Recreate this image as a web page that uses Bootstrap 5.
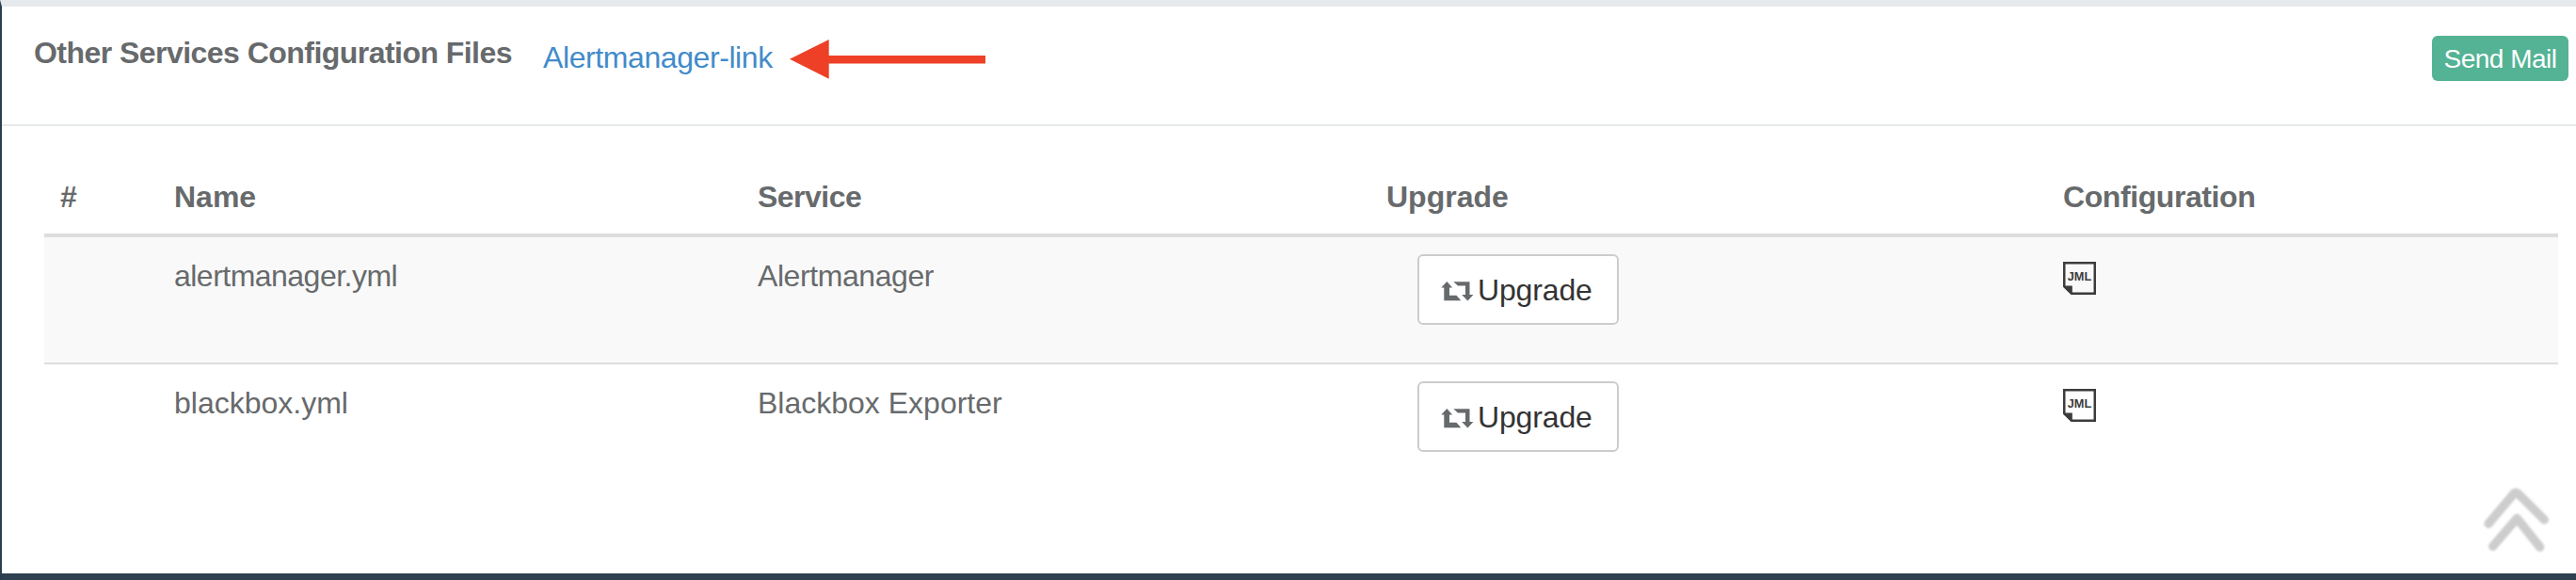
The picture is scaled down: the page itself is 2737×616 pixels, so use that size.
<!DOCTYPE html>
<html lang="en">
<head>
<meta charset="utf-8">
<title>Configuration Files</title>
<link href="https://cdn.jsdelivr.net/npm/bootstrap@5.3.0/dist/css/bootstrap.min.css" rel="stylesheet">
<style>
  body { font: 32px/46px "Liberation Sans", Arial, sans-serif; color: #676a6c; background: #fff; }
  .panel-box { height: 616px; border-left: 2px solid #2b3e50; border-top: 7px solid #e7eaec; }
  .panel-head { height: 127px; border-bottom: 2px solid #e7eaec; padding: 26px 8px 0 34px; }
  .panel-title { font: inherit; font-weight: 700; letter-spacing: -.54px; width: 541px; }
  .link-am { color: #428bca; letter-spacing: -.41px; width: 261px; margin-top: 5px; }
  .arrow { margin-top: 9px; }
  .btn-mail { margin-top: 5px; width: 145px; height: 48px; padding: 0; border: 0; border-radius: 6px; background: #53b394; color: #fff; font-size: 28px; line-height: 50px; letter-spacing: -.5px; }
  .panel-content { padding: 34px 19px 0 45px; }
  .svc-table { table-layout: fixed; width: 2671px; color: inherit; border-collapse: separate; border-spacing: 0; --bs-table-bg: transparent; }
  .svc-table > :not(caption) > * > * { padding: 18px 0 0 17px; border: 0; color: inherit; box-shadow: none; vertical-align: top; }
  .svc-table > thead > tr > th { height: 84px; border-bottom: 4px solid #ddd; }
  .svc-table > tbody > tr > td { height: 133px; }
  .svc-table > tbody > tr:first-child > td { height: 135px; background: #f9f9f9; border-bottom: 2px solid #ddd; }
  .svc-table > * > tr > :nth-child(2), .svc-table > * > tr > :nth-child(3) { padding-left: 16px; }
  .tight { letter-spacing: -.52px; }
  .snug { letter-spacing: -.42px; }
  .btn-upg { margin-left: 33px; width: 214px; height: 75px; padding: 13px 0 0 23px; border: 2px solid #ccc; border-radius: 6px; background: #fff; color: #333; font-size: 32px; line-height: 46px; gap: 4px; letter-spacing: -.15px; }
  .btn-upg svg { margin-top: 14px; }
  .to-top { position: absolute; left: 2636px; top: 514px; }
  .to-top svg { filter: blur(.8px); }
  .foot-bar { height: 7px; background: #2f4050; }
</style>
</head>
<body class="overflow-hidden">
<main class="panel-box d-flex flex-column">
  <header class="panel-head d-flex align-items-start flex-shrink-0">
    <h5 class="panel-title mb-0 text-nowrap">Other Services Configuration Files</h5>
    <a href="#" class="link-am text-decoration-none text-nowrap">Alertmanager-link</a>
    <svg class="arrow" width="210" height="42" viewBox="0 0 210 42"><path fill="#ed4026" d="M1 20.8 42.7 0V17H209V25.4H42.7V41.7Z"/></svg>
    <button class="btn btn-mail ms-auto text-nowrap">Send Mail</button>
  </header>
  <section class="panel-content flex-grow-1">
    <table class="table svc-table mb-0">
      <colgroup><col style="width:122px"><col style="width:620px"><col style="width:667px"><col style="width:719px"><col></colgroup>
      <thead><tr><th>&#35;</th><th>Name</th><th class="tight">Service</th><th>Upgrade</th><th class="snug">Configuration</th></tr></thead>
      <tbody>
        <tr>
          <td></td><td class="tight">alertmanager.yml</td><td class="snug">Alertmanager</td>
          <td><button class="btn btn-upg d-flex align-items-start"><svg width="35" height="21" viewBox="0 0 35 21" fill="#676a6c"><path d="M6.3 0 12.2 6.4H9V14.7H16.5L21.3 20.3H3.3V6.4H.3Z"/><path d="M13.3 .3H30.5V13.9H34.4L28.4 20.5 22.2 13.9H26V4.5H18Z"/></svg><span>Upgrade</span></button></td>
          <td><svg class="d-block mt-2" width="35" height="35" viewBox="0 0 35 35"><path d="M1.25 1.25H33.75V33.75H9L1.25 26.2Z" fill="none" stroke="#3c3c3c" stroke-width="2.5"/><path d="M1 25.5H9.8V34H8.6L1 27Z" fill="#3c3c3c"/><text x="4.7" y="20" font-size="12.5" font-weight="700" textLength="25.5" lengthAdjust="spacingAndGlyphs" letter-spacing="0" fill="#3c3c3c">JML</text></svg></td>
        </tr>
        <tr>
          <td></td><td>blackbox.yml</td><td>Blackbox Exporter</td>
          <td><button class="btn btn-upg d-flex align-items-start"><svg width="35" height="21" viewBox="0 0 35 21" fill="#676a6c"><path d="M6.3 0 12.2 6.4H9V14.7H16.5L21.3 20.3H3.3V6.4H.3Z"/><path d="M13.3 .3H30.5V13.9H34.4L28.4 20.5 22.2 13.9H26V4.5H18Z"/></svg><span>Upgrade</span></button></td>
          <td><svg class="d-block mt-2" width="35" height="35" viewBox="0 0 35 35"><path d="M1.25 1.25H33.75V33.75H9L1.25 26.2Z" fill="none" stroke="#3c3c3c" stroke-width="2.5"/><path d="M1 25.5H9.8V34H8.6L1 27Z" fill="#3c3c3c"/><text x="4.7" y="20" font-size="12.5" font-weight="700" textLength="25.5" lengthAdjust="spacingAndGlyphs" letter-spacing="0" fill="#3c3c3c">JML</text></svg></td>
        </tr>
      </tbody>
    </table>
  </section>
  <footer class="foot-bar flex-shrink-0"></footer>
</main>
<!-- scroll-to-top control floating over the panel -->
<a href="#" class="to-top d-block lh-1" aria-label="Back to top"><svg class="d-block" width="76" height="76" viewBox="0 0 76 76" fill="none" stroke="#cdcdcd" stroke-width="9.4" stroke-linecap="round" stroke-linejoin="round"><path d="M8 42.2 34.6 10.8Q37 7.8 40 10.8L67.3 38M12.7 66.3 38.3 36.5 62.7 67"/></svg></a>
<script src="https://cdn.jsdelivr.net/npm/bootstrap@5.3.0/dist/js/bootstrap.bundle.min.js"></script>
</body>
</html>
